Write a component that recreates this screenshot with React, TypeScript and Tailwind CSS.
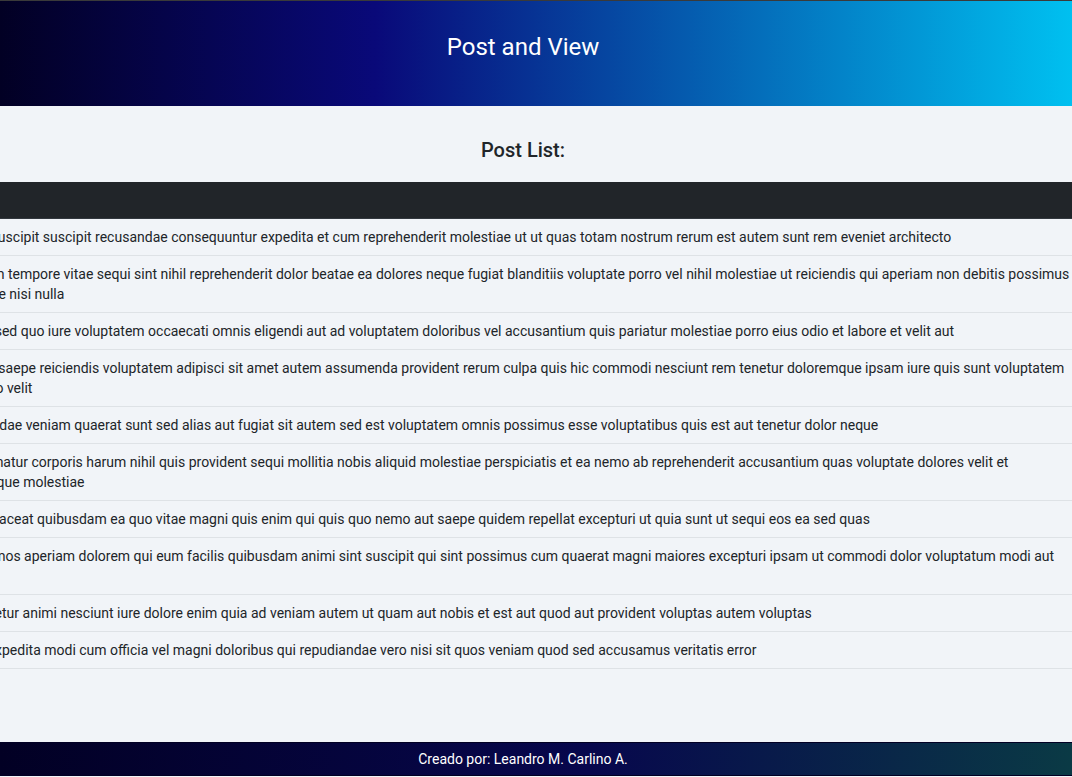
import React from "react";

const posts = [
  "quia et suscipit suscipit recusandae consequuntur expedita et cum reprehenderit molestiae ut ut quas totam nostrum rerum est autem sunt rem eveniet architecto",
  "est rerum tempore vitae sequi sint nihil reprehenderit dolor beatae ea dolores neque fugiat blanditiis voluptate porro vel nihil molestiae ut reiciendis qui aperiam non debitis possimus qui neque nisi nulla",
  "et iusto sed quo iure voluptatem occaecati omnis eligendi aut ad voluptatem doloribus vel accusantium quis pariatur molestiae porro eius odio et labore et velit aut",
  "ullam et saepe reiciendis voluptatem adipisci sit amet autem assumenda provident rerum culpa quis hic commodi nesciunt rem tenetur doloremque ipsam iure quis sunt voluptatem rerum illo velit",
  "repudiandae veniam quaerat sunt sed alias aut fugiat sit autem sed est voluptatem omnis possimus esse voluptatibus quis est aut tenetur dolor neque",
  "ut aspernatur corporis harum nihil quis provident sequi mollitia nobis aliquid molestiae perspiciatis et ea nemo ab reprehenderit accusantium quas voluptate dolores velit et doloremque molestiae",
  "dolore placeat quibusdam ea quo vitae magni quis enim qui quis quo nemo aut saepe quidem repellat excepturi ut quia sunt ut sequi eos ea sed quas",
  "dignissimos aperiam dolorem qui eum facilis quibusdam animi sint suscipit qui sint possimus cum quaerat magni maiores excepturi ipsam ut commodi dolor voluptatum modi aut vitae",
  "consectetur animi nesciunt iure dolore enim quia ad veniam autem ut quam aut nobis et est aut quod aut provident voluptas autem voluptas",
  "quo et expedita modi cum officia vel magni doloribus qui repudiandae vero nisi sit quos veniam quod sed accusamus veritatis error",
];

function App() {
  return (
    <div className="flex min-h-screen flex-col overflow-hidden bg-[#f1f4f8] font-['Roboto',sans-serif] text-[#212529]">
      {/* header */}
      <header className="h-[106px] border-t border-[#3a3a3a] bg-[linear-gradient(90deg,#020024_0%,#090979_35%,#00c0f0_100%)] pt-[30px] pr-[26px] text-center">
        <h1 className="text-[24px] leading-8 text-white">Post and View</h1>
      </header>

      <main className="flex-1 pt-[30px]">
        <h2 className="pr-[26px] text-center text-[20px] font-medium leading-7">
          Post List:
        </h2>

        <div className="mt-[18px] overflow-hidden">
          <table className="-ml-[63px] w-[1146px] border-collapse text-left text-sm">
            <thead>
              <tr className="border-b border-[#32383e] bg-[#212529]">
                <th className="h-9 px-2"></th>
              </tr>
            </thead>
            <tbody>
              {posts.map((body, i) => (
                <tr key={i} className="border-b border-[#dee2e6]">
                  <td className="px-2 py-2 leading-5">{body}</td>
                </tr>
              ))}
            </tbody>
          </table>
        </div>
      </main>

      {/* footer */}
      <footer className="mb-px flex h-[34px] items-center justify-center border-y border-[#020024] bg-[linear-gradient(90deg,#020024_0%,#07074d_55%,#0a3a45_100%)] pr-[26px] text-sm text-white">
        Creado por: Leandro M. Carlino A.
      </footer>
    </div>
  );
}

export default App;
